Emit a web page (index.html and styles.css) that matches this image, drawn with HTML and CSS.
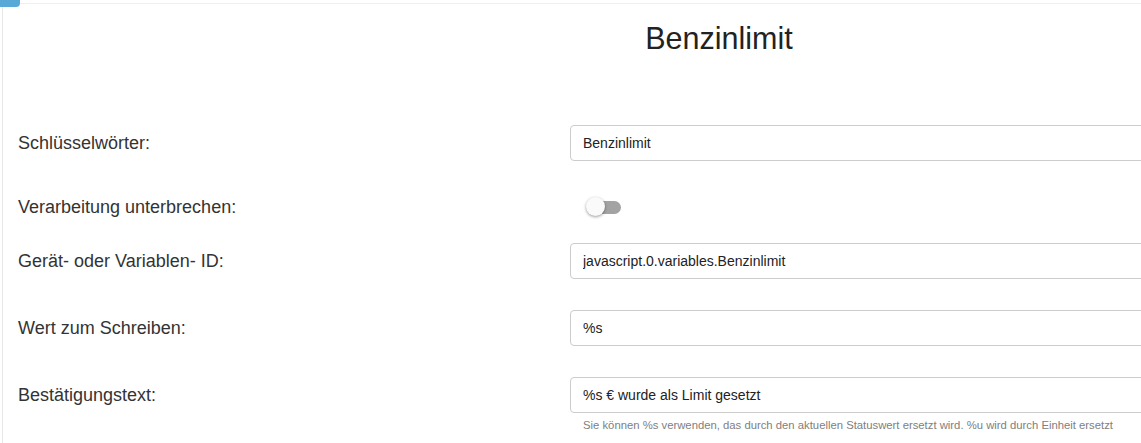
FILE: index.html
```html
<!DOCTYPE html>
<html lang="de">
<head>
    <meta charset="UTF-8">
    <meta name="viewport" content="width=device-width, initial-scale=1.0">
    <title>Benzinlimit</title>
    <link rel="stylesheet" href="styles.css">
</head>
<body>
    <div class="tab-marker"></div>
    <div class="panel">
        <h2 class="title">Benzinlimit</h2>
        <form class="settings">
            <div class="form-row">
                <label for="keywords">Schlüsselwörter:</label>
                <input type="text" id="keywords" value="Benzinlimit">
            </div>
            <div class="form-row toggle-row">
                <label>Verarbeitung unterbrechen:</label>
                <span class="switch"><span class="knob"></span></span>
            </div>
            <div class="form-row">
                <label for="device-id">Gerät- oder Variablen- ID:</label>
                <input type="text" id="device-id" value="javascript.0.variables.Benzinlimit">
            </div>
            <div class="form-row">
                <label for="write-value">Wert zum Schreiben:</label>
                <input type="text" id="write-value" value="%s">
            </div>
            <div class="form-row last">
                <label for="ack-text">Bestätigungstext:</label>
                <div class="field">
                    <input type="text" id="ack-text" value="%s € wurde als Limit gesetzt">
                    <p class="help">Sie können %s verwenden, das durch den aktuellen Statuswert ersetzt wird. %u wird durch Einheit ersetzt</p>
                </div>
            </div>
        </form>
    </div>
</body>
</html>
```

FILE: styles.css
```css
body {
    margin: 0;
    font-family: "Liberation Sans", Arial, sans-serif;
    color: #333;
    background-color: white;
    overflow: hidden;
}
.tab-marker {
    position: absolute;
    top: 0;
    left: 0;
    width: 20px;
    height: 7px;
    background-color: #59a9d7;
    border-bottom-right-radius: 4px;
}
.panel {
    margin: 3px 0 0 2px;
    width: 1432px;
    height: 460px;
    border-top: 1px solid #efefef;
    border-left: 1px solid #e8e8e8;
}
.title {
    margin: 18px 0 70px;
    font-size: 30.5px;
    font-weight: normal;
    line-height: 33px;
    text-align: center;
    color: #222;
}
.form-row {
    display: grid;
    grid-template-columns: 567px 1fr;
    align-items: center;
    margin-bottom: 31px;
}
.form-row label {
    padding-left: 15px;
    font-size: 18px;
}
.form-row.last {
    align-items: start;
}
.form-row.last label {
    line-height: 36px;
}
.toggle-row {
    height: 30px;
    margin-bottom: 21px;
}
input {
    box-sizing: border-box;
    width: 100%;
    height: 36px;
    padding: 0 12px;
    font-family: inherit;
    font-size: 14px;
    color: #222;
    border: 1px solid #ccc;
    border-radius: 4px;
    outline: none;
}
.help {
    margin: 5px 0 0 13px;
    font-size: 11.3px;
    line-height: 14px;
    color: #808080;
}
.switch {
    position: relative;
    display: block;
    width: 33px;
    height: 13px;
    margin-left: 18px;
    border-radius: 7px;
    background-color: #a3a3a3;
}
.knob {
    position: absolute;
    top: -4px;
    left: -2px;
    width: 19px;
    height: 19px;
    border-radius: 50%;
    background-color: #fafafa;
    box-shadow: 0 1px 3px rgba(0, 0, 0, 0.4);
}
```
